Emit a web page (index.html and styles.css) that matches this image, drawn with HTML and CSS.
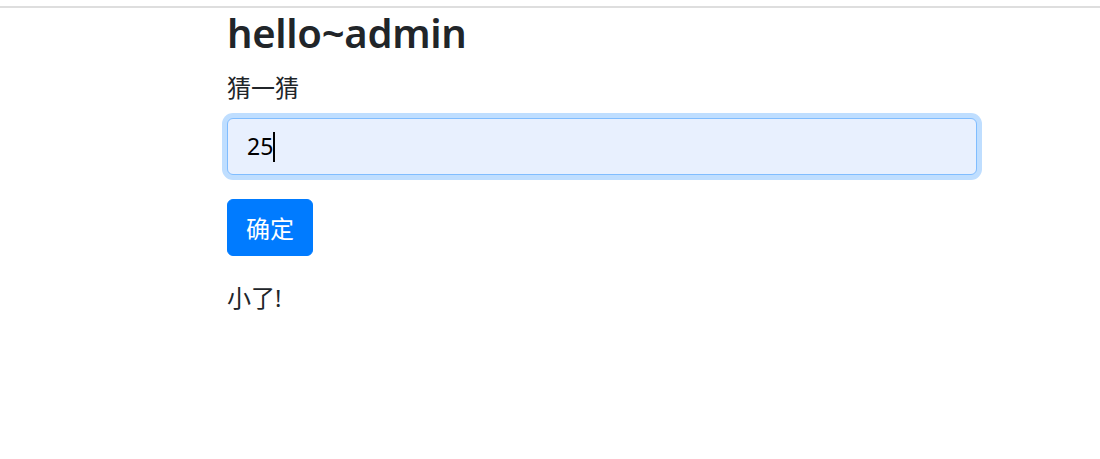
FILE: index.html
```html
<!DOCTYPE html>
<html lang="zh">
<head>
<meta charset="utf-8">
<title>猜一猜</title>
<link rel="stylesheet" href="styles.css">
</head>
<body>
<div class="topbar"></div>
<main class="container">
  <h3 class="title">hello~admin</h3>
  <form class="guess-form">
    <div class="form-group">
      <label class="label" for="num">猜一猜</label>
      <div class="input-wrap">
        <div class="input">25<span class="caret"></span></div>
      </div>
    </div>
    <button type="button" class="btn">确定</button>
  </form>
  <p class="result">小了!</p>
</main>
</body>
</html>
```

FILE: styles.css
```css
* { box-sizing: border-box; }
html, body { margin: 0; padding: 0; background: #fff; }
body {
  font-family: "Noto Sans", "Noto Sans CJK SC", sans-serif;
  font-size: 24px;
  line-height: 1.5;
  color: #212529;
}
.topbar {
  height: 8px;
  border-bottom: 2px solid #dedede;
}
.container {
  width: 750px;
  margin-left: 227px;
}
.title {
  margin: 0 0 12px 0;
  font-size: 40px;
  font-weight: 600;
  line-height: 1.25;
  letter-spacing: -0.3px;
}
.guess-form { margin: 0; }
.form-group { margin-bottom: 24px; }
.label {
  display: block;
  margin-bottom: 12px;
}
.input {
  height: 57px;
  padding: 0 18px 0 19px;
  display: flex;
  align-items: center;
  border: 1.5px solid #80bdff;
  border-radius: 6px;
  background: #e8f0fe;
  box-shadow: 0 0 0 5px #bfdeff;
  color: #000;
  font-size: 23px;
}
.caret {
  display: inline-block;
  width: 2px;
  height: 30px;
  background: #000;
  margin-left: 0;
}
.btn {
  display: block;
  height: 57px;
  padding: 0 18px;
  border: 1.5px solid #007bff;
  border-radius: 6px;
  background: #007bff;
  color: #fff;
  font-family: inherit;
  font-size: 24px;
}
.result {
  margin: 24px 0 0 0;
}
```
